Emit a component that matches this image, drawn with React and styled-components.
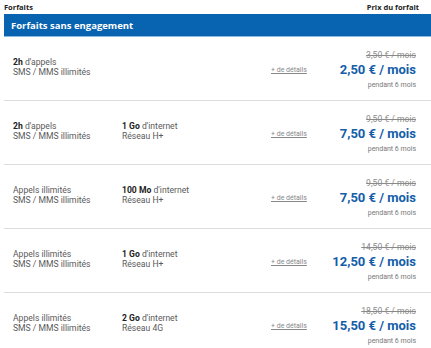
import React from "react";
import styled, { createGlobalStyle } from "styled-components";

const Global = createGlobalStyle`
  body {
    margin: 0;
    background: #fff;
    font-family: Roboto, "Liberation Sans", sans-serif;
  }
`;

const offers = [
  { calls: <><b>2h</b> d'appels</>, data: null, old: "3,50 € / mois", price: "2,50 € / mois" },
  { calls: <><b>2h</b> d'appels</>, data: { amount: "1 Go", net: "Réseau H+" }, old: "9,50 € / mois", price: "7,50 € / mois" },
  { calls: "Appels illimités", data: { amount: "100 Mo", net: "Réseau H+" }, old: "9,50 € / mois", price: "7,50 € / mois" },
  { calls: "Appels illimités", data: { amount: "1 Go", net: "Réseau H+" }, old: "14,50 € / mois", price: "12,50 € / mois" },
  { calls: "Appels illimités", data: { amount: "2 Go", net: "Réseau 4G" }, old: "18,50 € / mois", price: "15,50 € / mois" },
];

const Page = styled.div`
  padding-left: 4px;
  width: 427px;
`;

const TopBar = styled.div`
  display: flex;
  justify-content: space-between;
  align-items: center;
  height: 14px;
  padding-right: 12px;
  font-family: "Open Sans", "Liberation Sans", sans-serif;
  font-size: 7.5px;
  font-weight: 700;
  color: #222;
`;

const Banner = styled.div`
  height: 22px;
  display: flex;
  align-items: center;
  padding-left: 7px;
  background: #0863b0;
  border-bottom: 1px solid #8bb8de;
  color: #fff;
  font-family: "Open Sans", "Liberation Sans", sans-serif;
  font-weight: 700;
  font-size: 9.5px;
`;

const Row = styled.div`
  display: grid;
  grid-template-columns: 109px 149px 1fr auto;
  align-items: center;
  height: 63px;
  padding: 0 15px 0 9px;
  border-bottom: 1px solid #dcdcdc;
`;

const Feature = styled.div`
  font-size: 8.6px;
  line-height: 10.5px;
  color: #5a5a5a;
  margin-top: -3px;
  b {
    color: #222;
    font-weight: 700;
  }
`;

const Details = styled.a`
  font-size: 7px;
  color: #888;
  text-decoration: underline;
  align-self: center;
  margin-top: 2px;
`;

const PriceBox = styled.div`
  display: flex;
  flex-direction: column;
  align-items: flex-end;
  margin-top: 3px;
`;

const OldPrice = styled.span`
  font-size: 8.6px;
  color: #8a8a8a;
  text-decoration: line-through;
  line-height: 12px;
`;

const Price = styled.span`
  font-size: 13px;
  font-weight: 700;
  color: #145da8;
  line-height: 17px;
`;

const Note = styled.span`
  font-size: 7px;
  color: #777;
  line-height: 12px;
  margin-top: 1px;
`;

export default function App() {
  return (
    <Page>
      <Global />
      <TopBar>
        <span>Forfaits</span>
        <span>Prix du forfait</span>
      </TopBar>
      <Banner>Forfaits sans engagement</Banner>
      {offers.map((o, i) => (
        <Row key={i}>
          <Feature>
            {o.calls}
            <br />
            SMS / MMS illimités
          </Feature>
          <Feature>
            {o.data && (
              <>
                <b>{o.data.amount}</b> d'internet
                <br />
                {o.data.net}
              </>
            )}
          </Feature>
          <Details>+ de détails</Details>
          <PriceBox>
            <OldPrice>{o.old}</OldPrice>
            <Price>{o.price}</Price>
            <Note>pendant 6 mois</Note>
          </PriceBox>
        </Row>
      ))}
    </Page>
  );
}
